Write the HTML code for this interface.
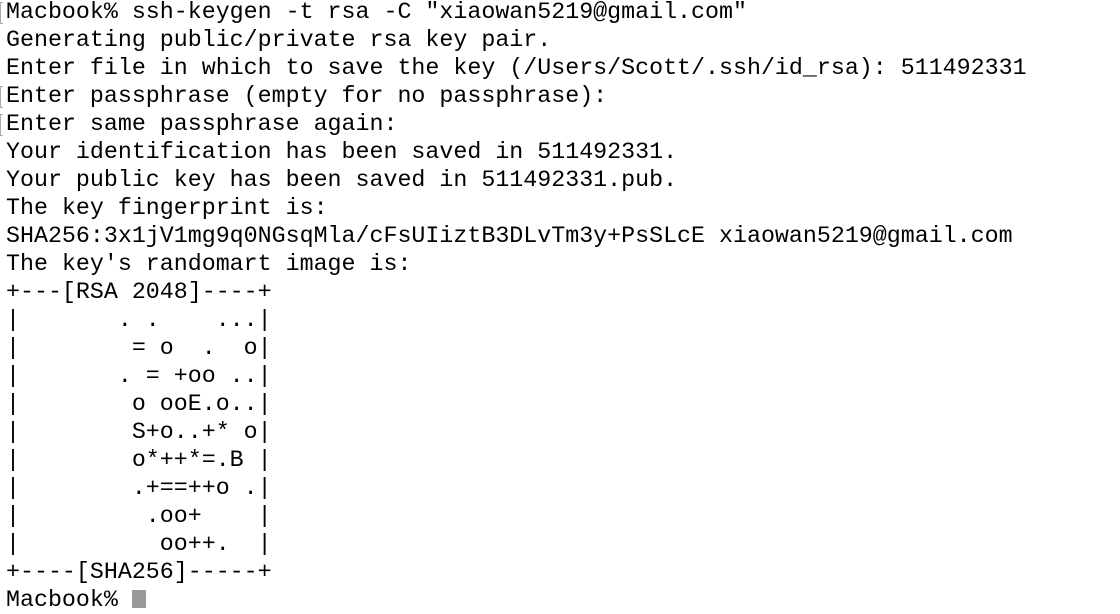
<!DOCTYPE html>
<html><head><meta charset="utf-8"><style>
html,body{margin:0;padding:0;background:#fff;width:1120px;height:598px;overflow:hidden;}
pre{position:absolute;left:6px;top:-2px;margin:0;font-family:"Liberation Mono",monospace;font-size:23.3px;line-height:28px;color:#000;}
.m{position:absolute;left:0;width:2px;height:20px;border:1px solid #aaa;border-right:none;}
.c{display:inline-block;width:14px;height:18px;background:#999;vertical-align:-2px;}
</style></head><body>
<div class="m" style="top:2px"></div>
<div class="m" style="top:86px"></div>
<div class="m" style="top:114px"></div>
<pre>Macbook% ssh-keygen -t rsa -C "xiaowan5219@gmail.com"
Generating public/private rsa key pair.
Enter file in which to save the key (/Users/Scott/.ssh/id_rsa): 511492331
Enter passphrase (empty for no passphrase):
Enter same passphrase again:
Your identification has been saved in 511492331.
Your public key has been saved in 511492331.pub.
The key fingerprint is:
SHA256:3x1jV1mg9q0NGsqMla/cFsUIiztB3DLvTm3y+PsSLcE xiaowan5219@gmail.com
The key's randomart image is:
+---[RSA 2048]----+
|       . .    ...|
|        = o  .  o|
|       . = +oo ..|
|        o ooE.o..|
|        S+o..+* o|
|        o*++*=.B |
|        .+==++o .|
|         .oo+    |
|          oo++.  |
+----[SHA256]-----+
Macbook% <span class="c"></span></pre>
</body></html>
